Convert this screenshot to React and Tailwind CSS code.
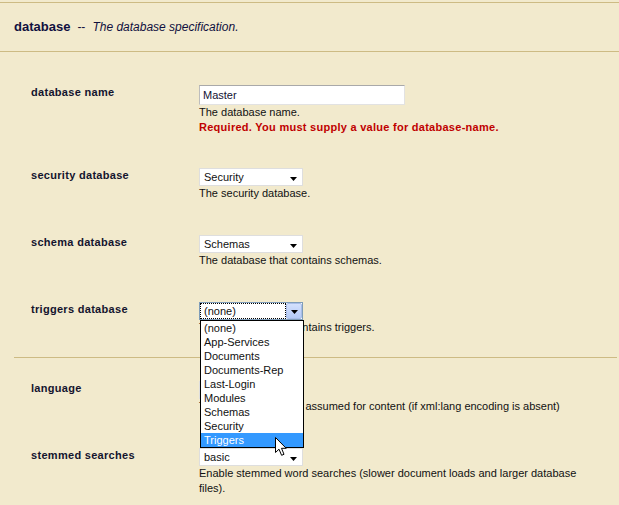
import React from "react";

const Arrow = () => (
  <svg width="7" height="4" viewBox="0 0 7 4" className="absolute right-[5px] top-[8px]">
    <path d="M0 0H7L3.5 4Z" fill="#000" />
  </svg>
);

function Select({ value }) {
  return (
    <div className="relative w-[104px] h-[18px] bg-white border border-[#dedede] text-[11px] leading-[16px] pl-[4px] text-[#111]">
      {value}
      <Arrow />
    </div>
  );
}

function Label({ children }) {
  return <div className="text-[11px] tracking-[0.3px] leading-[15px] font-bold text-[#14142e]">{children}</div>;
}

function Desc({ children, className = "" }) {
  return <div className={"text-[11px] leading-[15px] text-[#111] " + className}>{children}</div>;
}

const items = [
  "(none)",
  "App-Services",
  "Documents",
  "Documents-Rep",
  "Last-Login",
  "Modules",
  "Schemas",
  "Security",
  "Triggers",
];

function OpenSelect() {
  return (
    <div className="relative w-[104px]">
      <div className="h-[18px] bg-white border border-[#7f9db9] flex items-stretch">
        <div className="flex-1 border border-dotted border-black text-[11px] leading-[14px] pl-[3px] text-[#111]">
          (none)
        </div>
        <div className="w-[16px] relative bg-gradient-to-b from-[#d3e0fd] to-[#b4caf6] border border-[#a8bde8] rounded-[2px]">
          <svg width="7" height="4" viewBox="0 0 7 4" className="absolute left-[4px] top-[6px]">
            <path d="M0 0H7L3.5 4Z" fill="#000" />
          </svg>
        </div>
      </div>
      <div className="absolute z-10 left-[1px] top-[18px] w-[104px] bg-white border border-black">
        {items.map((it) => (
          <div
            key={it}
            className={
              "h-[14px] text-[11px] leading-[14px] pl-[3px] " +
              (it === "Triggers" ? "bg-[#3399ff] text-white" : "text-[#111]")
            }
          >
            {it}
          </div>
        ))}
        <svg
          width="13"
          height="20"
          viewBox="0 0 13 20"
          className="absolute left-[74px] top-[116px]"
        >
          <path
            d="M0.5 0.5V15.5L4 12.2L6.6 18.3L9 17.3L6.5 11.3H11.2Z"
            fill="#fff"
            stroke="#000"
            strokeWidth="1"
            strokeLinejoin="round"
          />
        </svg>
      </div>
    </div>
  );
}

function Row({ label, children, className = "" }) {
  return (
    <div className={"grid grid-cols-[168px_400px] " + className}>
      <Label>{label}</Label>
      <div>{children}</div>
    </div>
  );
}

export default function App() {
  return (
    <div className="w-[619px] h-[505px] bg-[#f2eacd] overflow-hidden font-['Liberation_Sans',Arial,sans-serif]">
      <div className="h-[2px]" />
      <div className="h-[50px] border-y border-[#cdbb84] flex items-center pl-[14px] text-[#101040]">
        <span className="text-[13px] font-bold">database</span>
        <span className="text-[12px] ml-[7px]">--</span>
        <span className="text-[12px] italic ml-[7px]">The database specification.</span>
      </div>

      <div className="pl-[31px] pt-[33px]">
        <Row label="database name">
          <div className="w-[206px] h-[20px] bg-white border border-[#e2e2e2] border-t-[#a9a9a9] border-l-[#bdbdbd] text-[11px] leading-[18px] pl-[3px] text-[#111133]">
            Master
          </div>
          <Desc>The database name.</Desc>
          <Desc className="font-bold tracking-[0.27px] text-[#c00000]">
            Required. You must supply a value for database-name.
          </Desc>
        </Row>
        <Row label="security database" className="mt-[33px]">
          <Select value="Security" />
          <Desc>The security database.</Desc>
        </Row>
        <Row label="schema database" className="mt-[34px]">
          <Select value="Schemas" />
          <Desc>The database that contains schemas.</Desc>
        </Row>
        <Row label="triggers database" className="relative z-10 mt-[34px]">
          <OpenSelect />
          <Desc>The database that contains triggers.</Desc>
        </Row>
      </div>

      <div className="ml-[14px] w-[603px] mt-[22px] border-t border-[#cdbb84]" />

      <div className="pl-[31px] pt-[23px]">
        <Row label="language">
          <Select value="en" />
          <Desc>The default language assumed for content (if xml:lang encoding is absent)</Desc>
        </Row>
        <Row label="stemmed searches" className="mt-[34px]">
          <Select value="basic" />
          <Desc>
            Enable stemmed word searches (slower document loads and larger database files).
          </Desc>
        </Row>
      </div>
    </div>
  );
}
